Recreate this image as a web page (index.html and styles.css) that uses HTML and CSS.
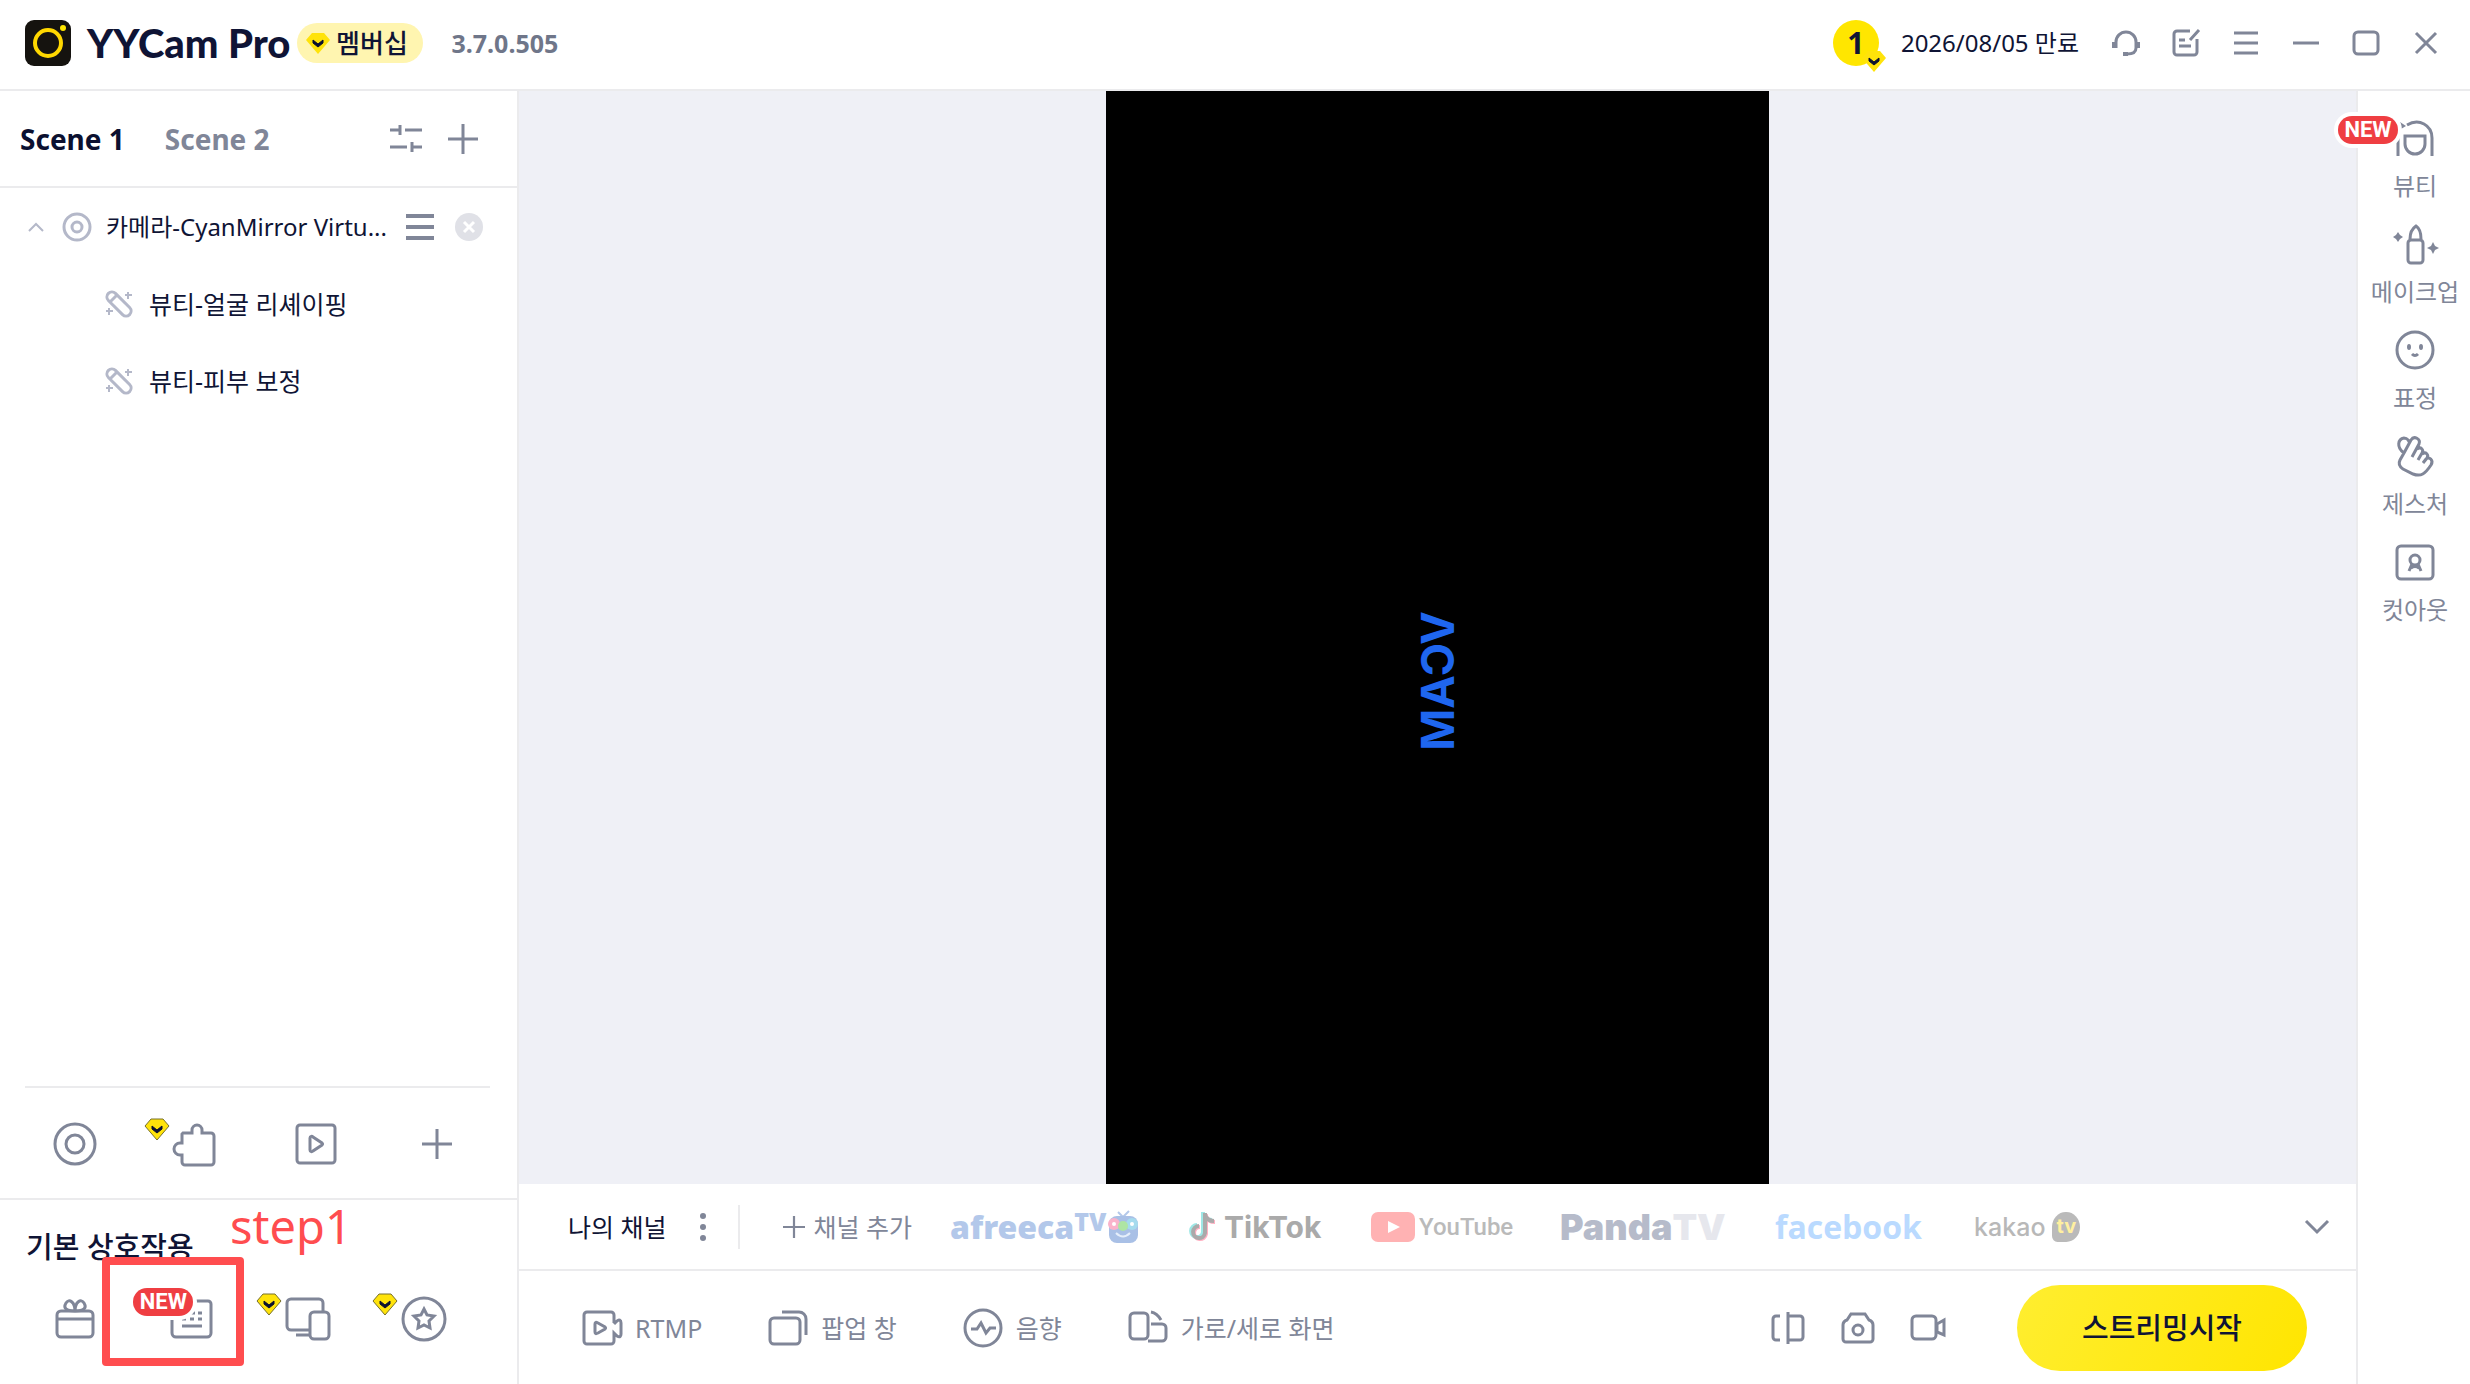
FILE: index.html
```html
<!DOCTYPE html>
<html lang="ko">
<head>
    <meta charset="UTF-8">
    <meta name="viewport" content="width=device-width, initial-scale=1.0">
    <title>YYCam Pro</title>
    <link rel="stylesheet" href="styles.css">
</head>
<body>
<!-- shared icons -->
<svg class="defs" width="0" height="0">
    <symbol id="gem" viewBox="0 0 26 24">
        <path d="M7 2h12l6 7-12 14L1 9z" fill="#ffe30a"/>
        <path d="M8 9l5 4 5-4v3l-5 4-5-4z" fill="#0b1030" stroke="#0b1030" stroke-width="1"/>
    </symbol>
    <symbol id="plus" viewBox="0 0 30 30"><path d="M15 0v30M0 15h30"/></symbol>
    <symbol id="menu" viewBox="0 0 28 28"><path d="M2 4h24M2 14h24M2 24h24"/></symbol>
    <symbol id="drag" viewBox="0 0 28 28"><path d="M0 3h28M0 14h28M0 25h28"/></symbol>
    <symbol id="wand" viewBox="0 0 28 28">
        <rect x="-1" y="9" width="30" height="10" rx="5" transform="rotate(45 14 14)"/>
        <path d="M5 12l7-7"/>
        <path d="M23 2v7M20 5h7M4 18v7M1 21h7" stroke-width="2"/>
    </symbol>
</svg>

<header class="topbar">
    <svg class="logo" viewBox="0 0 46 46">
        <rect width="46" height="46" rx="9" fill="#15130f"/>
        <circle cx="23" cy="23" r="13" fill="none" stroke="#ffd800" stroke-width="4"/>
        <circle cx="38" cy="8" r="3" fill="#ffe600"/>
    </svg>
    <h1 class="brand">YYCam Pro</h1>
    <button class="member"><svg class="gem"><use href="#gem"/></svg>멤버십</button>
    <span class="version">3.7.0.505</span>
    <div class="account">
        <span class="coin">1<svg class="gem coin-gem"><use href="#gem"/></svg></span>
        <span class="expire">2026/08/05 만료</span>
    </div>
    <div class="window-tools">
        <button aria-label="고객센터"><svg class="icon" viewBox="0 0 28 28"><path d="M4 19v-6a10 10 0 0 1 20 0v6c0 5-4 6-9 6"/><path d="M2 13v6M26 13v6M11 25h5" stroke-width="4"/></svg></button>
        <button aria-label="피드백"><svg class="icon" viewBox="0 0 28 28"><path d="M18 2H5a3 3 0 0 0-3 3v18a3 3 0 0 0 3 3h17a3 3 0 0 0 3-3V10M18 11l9-10M7 11h6M7 17h12"/></svg></button>
        <button aria-label="메뉴"><svg class="icon"><use href="#menu"/></svg></button>
        <button aria-label="최소화"><svg class="icon" viewBox="0 0 28 28"><path d="M1 14h26"/></svg></button>
        <button aria-label="최대화"><svg class="icon" viewBox="0 0 28 28"><rect x="2" y="3" width="24" height="22" rx="4"/></svg></button>
        <button aria-label="닫기"><svg class="icon" viewBox="0 0 28 28"><path d="M4 4l20 20M24 4L4 24"/></svg></button>
    </div>
</header>

<div class="workspace">
    <aside class="sidebar">
        <nav class="scenes">
            <button class="scene active">Scene 1</button>
            <button class="scene">Scene 2</button>
            <div class="scene-tools">
                <button aria-label="장면 설정"><svg class="icon sliders" viewBox="0 0 32 28"><path d="M0 5h9M15 5h17M10 0v10M0 22h17M23 22h9M22 17v10"/></svg></button>
                <button aria-label="장면 추가"><svg class="icon add"><use href="#plus"/></svg></button>
            </div>
        </nav>

        <ul class="sources">
            <li class="source">
                <svg class="icon pale chevron" viewBox="0 0 16 10"><path d="M1 9l7-7 7 7"/></svg>
                <svg class="icon pale lens" viewBox="0 0 30 30"><circle cx="15" cy="15" r="13"/><circle cx="15" cy="15" r="5"/></svg>
                <span class="source-name">카메라-CyanMirror Virtu...</span>
                <button aria-label="소스 메뉴"><svg class="icon drag"><use href="#drag"/></svg></button>
                <button aria-label="소스 삭제"><svg class="remove" viewBox="0 0 28 28"><circle cx="14" cy="14" r="14" fill="#e0e1e7"/><path d="M9 9l10 10M19 9L9 19" stroke="#fff" stroke-width="3"/></svg></button>
            </li>
            <li class="effect"><svg class="icon pale"><use href="#wand"/></svg>뷰티-얼굴 리셰이핑</li>
            <li class="effect"><svg class="icon pale"><use href="#wand"/></svg>뷰티-피부 보정</li>
        </ul>

        <div class="add-row">
            <button aria-label="카메라"><svg class="icon" viewBox="0 0 44 44"><circle cx="22" cy="22" r="20"/><circle cx="22" cy="22" r="9"/></svg></button>
            <button aria-label="플러그인"><svg class="icon" viewBox="0 0 44 44"><path d="M9 11h9V8a5 5 0 0 1 10 0v3h9a3 3 0 0 1 3 3v26a3 3 0 0 1-3 3H11a3 3 0 0 1-3-3v-7H6a6 6 0 0 1 0-12h2v-9z"/></svg><svg class="gem tag-gem"><use href="#gem"/></svg></button>
            <button aria-label="미디어"><svg class="icon" viewBox="0 0 44 44"><rect x="3" y="3" width="38" height="38" rx="3"/><path d="M16 16c0-2 2-2 3-1l9 6q1 1 0 2l-9 6c-1 1-3 1-3-1z"/></svg></button>
            <button aria-label="추가"><svg class="icon add"><use href="#plus"/></svg></button>
        </div>

        <section class="interact">
            <h2>기본 상호작용</h2>
            <div class="interact-row">
                <button aria-label="선물"><svg class="icon" viewBox="0 0 44 44"><rect x="4" y="14" width="36" height="26" rx="4"/><path d="M4 22h36M22 14c-9 0-12-3-9-8s9-1 9 8c0-9 6-13 9-8s0 8-9 8"/></svg></button>
                <button aria-label="키보드"><svg class="icon" viewBox="0 0 44 44"><path d="M26 4h13a3 3 0 0 1 3 3v29a4 4 0 0 1-4 4H7a4 4 0 0 1-4-4V22M22 16h4M29 16h4M13 22h4M21 22h4M29 22h4M13 29h20"/></svg><span class="new tag-new">NEW</span></button>
                <button aria-label="화면 공유"><svg class="icon" viewBox="0 0 44 44"><path d="M23 33H5a4 4 0 0 1-4-4V6a4 4 0 0 1 4-4h28a4 4 0 0 1 4 4v8M10 38h13"/><rect x="24" y="15" width="19" height="27" rx="4"/></svg><svg class="gem tag-gem"><use href="#gem"/></svg></button>
                <button aria-label="즐겨찾기"><svg class="icon" viewBox="0 0 44 44"><circle cx="22" cy="22" r="21"/><path d="M22 12l3 6 7 1-5 5 1 7-6-3-6 3 1-7-5-5 7-1z"/></svg><svg class="gem tag-gem"><use href="#gem"/></svg></button>
                <span class="marker"></span>
            </div>
            <span class="step">step1</span>
        </section>
    </aside>

    <main class="center">
        <div class="stage">
            <div class="video"><span class="watermark">VCAM</span></div>
        </div>

        <div class="channels">
            <span class="my-channel">나의 채널</span>
            <button aria-label="채널 메뉴"><svg class="dots" viewBox="0 0 6 30"><circle cx="3" cy="4" r="3"/><circle cx="3" cy="15" r="3"/><circle cx="3" cy="26" r="3"/></svg></button>
            <button class="channel-add"><svg class="icon"><use href="#plus"/></svg>채널 추가</button>
            <div class="platforms">
                <a href="#" class="afreeca">afreeca<sup>TV</sup><svg viewBox="0 0 30 34"><path d="M10 2l5 5 6-6" fill="none" stroke="#b3c8ea" stroke-width="2"/><rect x="1" y="6" width="29" height="27" rx="8" fill="#a9c0e6"/><circle cx="6" cy="14" r="6" fill="#f9b3cb"/><circle cx="24" cy="14" r="6" fill="#a5dbee"/><circle cx="15" cy="16" r="5" fill="#aee5a4"/><circle cx="6" cy="14" r="2" fill="#fff"/><circle cx="24" cy="14" r="2" fill="#fff"/><path d="M8 23q7 7 14 0" fill="none" stroke="#e5eefa" stroke-width="2"/></svg></a>
                <a href="#" class="tiktok"><svg viewBox="0 0 28 32" fill="none" stroke-width="4"><path d="M14 1v20a6 6 0 1 1-6-7M14 3q2 6 9 6" stroke="#9fe8e6"/><path d="M17 3v20a6 6 0 1 1-6-7M17 5q2 6 9 6" stroke="#ffb0c2"/><path d="M16 2v20a6 6 0 1 1-6-7M16 4q2 6 9 6" stroke="#aaa"/></svg>TikTok</a>
                <a href="#" class="youtube"><svg viewBox="0 0 44 30"><rect width="44" height="30" rx="7" fill="#ffb2b3"/><path d="M17 9l12 6-12 6z" fill="#fff"/></svg>YouTube</a>
                <a href="#" class="panda">Panda<span>TV</span></a>
                <a href="#" class="facebook">facebook</a>
                <a href="#" class="kakao">kakao<span class="bubble">tv</span></a>
            </div>
            <button class="more" aria-label="더보기"><svg class="icon" viewBox="0 0 26 16"><path d="M2 2l11 11L24 2"/></svg></button>
        </div>

        <div class="toolbar">
            <button class="tool"><svg class="icon" viewBox="0 0 40 36"><path d="M32 13V5a3 3 0 0 0-3-3H5a3 3 0 0 0-3 3v26a3 3 0 0 0 3 3h24a3 3 0 0 0 3-3v-8l3 3c3 2 4 0 4-2V13c0-3-2-4-4-2l-3 3"/><path d="M13 14c0-2 1-2 3-1l7 4q1 1 0 2l-7 4c-2 1-3 1-3-1z"/></svg>RTMP</button>
            <button class="tool"><svg class="icon" viewBox="0 0 40 36"><rect x="2" y="8" width="30" height="26" rx="4"/><path d="M14 2h17a7 7 0 0 1 7 7v16"/></svg>팝업 창</button>
            <button class="tool"><svg class="icon" viewBox="0 0 40 40"><circle cx="20" cy="20" r="18"/><path d="M8 21h6l4-6 5 10 4-5h6"/></svg>음향</button>
            <button class="tool"><svg class="icon" viewBox="0 0 40 36"><rect x="2" y="3" width="18" height="26" rx="4"/><path d="M23 14h11a4 4 0 0 1 4 4v9a4 4 0 0 1-4 4H20M23 2q6 1 10 8"/></svg>가로/세로 화면</button>
            <div class="capture">
                <button aria-label="좌우 반전"><svg class="icon" viewBox="0 0 34 32"><path d="M9 4H5a3 3 0 0 0-3 3v18a3 3 0 0 0 3 3h4M17 0v32M17 4h12a3 3 0 0 1 3 3v18a3 3 0 0 1-3 3H17"/></svg></button>
                <button aria-label="사진 촬영"><svg class="icon" viewBox="0 0 34 32"><path d="M10 2h14l4 6c3 1 4 2 4 5v14a3 3 0 0 1-3 3H5a3 3 0 0 1-3-3V13c0-3 1-4 4-5z"/><circle cx="17" cy="18" r="5"/></svg></button>
                <button aria-label="녹화"><svg class="icon" viewBox="0 0 34 32"><rect x="1" y="4" width="24" height="23" rx="4"/><path d="M26 12l7-4v15l-7-3z"/></svg></button>
            </div>
            <button class="start">스트리밍시작</button>
        </div>
    </main>

    <nav class="rail">
        <button><svg class="icon" viewBox="0 0 40 40"><path d="M3 38V18M12 7c12-7 25 0 25 13v18M10 18h20v8a10 10 0 0 1-20 0z"/><path d="M5 4l6 4-5 3z" fill="currentColor" stroke="none"/></svg>뷰티<span class="new rail-new">NEW</span></button>
        <button><svg class="icon lipstick" viewBox="0 0 48 40"><rect x="17" y="16" width="15" height="23" rx="3"/><path d="M19 15c0-8 3-11 6-13 3 2 5 5 5 13"/><path d="M7 8l2 3 3 2-3 2-2 3-2-3-3-2 3-2zM42 18l2 4 4 2-4 2-2 4-2-4-4-2 4-2z" fill="currentColor" stroke="none"/></svg>메이크업</button>
        <button><svg class="icon" viewBox="0 0 40 40"><circle cx="20" cy="20" r="18"/><ellipse cx="14" cy="17" rx="2" ry="3" fill="currentColor" stroke="none"/><ellipse cx="26" cy="17" rx="2" ry="3" fill="currentColor" stroke="none"/><path d="M17 24q3 3 6 0"/></svg>표정</button>
        <button><svg class="icon" viewBox="0 0 40 40"><path d="M9 17C1 11 3 3 9 2c4 0 5 4 5 4M9 17L16 4c3-5 10-1 8 4l-7 13M9 17l-4 7c-2 4 0 7 3 9l10 5c8 3 12 0 18-9 3-5-2-9-5-6l-3 4M22 13c4-3 7 1 5 4l-4 7M27 18c4-3 7 1 5 4l-4 5"/></svg>제스처</button>
        <button><svg class="icon" viewBox="0 0 40 40"><rect x="2" y="4" width="36" height="33" rx="4"/><circle cx="20" cy="18" r="5"/><path d="M17 22l-3 7M23 22l3 7M16 26q4-3 8 0"/></svg>컷아웃</button>
    </nav>
</div>
</body>
</html>
```
FILE: styles.css
```css
* {
    box-sizing: border-box;
}
body {
    margin: 0;
    height: 100vh;
    display: flex;
    flex-direction: column;
    background: #fff;
    color: #0f1435;
    font-family: "Noto Sans", "Noto Sans CJK KR", sans-serif;
    font-size: 24px;
    line-height: 32px;
}
button {
    display: flex;
    align-items: center;
    justify-content: center;
    position: relative;
    padding: 0;
    border: none;
    background: none;
    color: #808698;
    font: inherit;
    cursor: pointer;
}
a {
    color: inherit;
    text-decoration: none;
}
svg {
    display: block;
    flex: none;
}
.defs {
    position: absolute;
}
.icon {
    width: 28px;
    height: 28px;
    fill: none;
    stroke: currentColor;
    stroke-width: 3;
    overflow: visible;
}
.pale {
    color: #b4b8c9;
}
.gem {
    width: 26px;
    height: 24px;
}
.add {
    width: 30px;
    height: 30px;
}
.new {
    position: absolute;
    width: 60px;
    height: 28px;
    border-radius: 14px;
    background: #ef3e42;
    box-shadow: 0 0 0 4px #fff;
    color: #fff;
    font-family: Roboto, sans-serif;
    font-size: 22px;
    font-weight: 700;
    line-height: 28px;
    text-align: center;
}

/* top bar */
.topbar {
    display: flex;
    align-items: center;
    height: 91px;
    padding: 0 30px 4px 25px;
    border-bottom: 2px solid #ebebed;
}
.logo {
    width: 46px;
    height: 46px;
}
.brand {
    margin: 0 7px 0 16px;
    font-family: Lato, sans-serif;
    font-size: 40px;
    font-weight: 900;
    line-height: 46px;
    white-space: nowrap;
}
.member {
    gap: 5px;
    width: 126px;
    height: 40px;
    padding-right: 8px;
    border-radius: 20px;
    background: #fff5b0;
    color: #0f1435;
    font-size: 26px;
    font-weight: 500;
}
.version {
    margin-left: 28px;
    color: #6f7689;
    font-size: 25px;
    font-weight: 700;
}
.account {
    display: flex;
    align-items: center;
    gap: 22px;
    margin-left: auto;
}
.coin {
    position: relative;
    width: 46px;
    height: 46px;
    border-radius: 50%;
    background: #ffe600;
    font-size: 30px;
    font-weight: 700;
    line-height: 46px;
    text-align: center;
}
.coin-gem {
    position: absolute;
    right: -8px;
    bottom: -7px;
}
.window-tools {
    display: flex;
    gap: 32px;
    margin-left: 33px;
}

/* layout */
.workspace {
    flex: 1;
    display: flex;
    min-height: 0;
}
.sidebar {
    display: flex;
    flex-direction: column;
    width: 519px;
    border-right: 2px solid #ebebed;
}
.center {
    flex: 1;
    display: flex;
    flex-direction: column;
    min-width: 0;
}
.rail {
    display: flex;
    flex-direction: column;
    gap: 22px;
    width: 114px;
    padding-top: 27px;
    border-left: 2px solid #ebebed;
}

/* scenes and sources */
.scenes {
    display: flex;
    align-items: center;
    gap: 40px;
    height: 97px;
    padding: 0 39px 0 20px;
    border-bottom: 2px solid #ebebed;
}
.scene {
    font-size: 28px;
    font-weight: 700;
}
.active {
    color: #0b1030;
}
.scene-tools {
    display: flex;
    align-items: center;
    gap: 26px;
    margin-left: auto;
}
.sliders {
    width: 32px;
}
.sources {
    flex: 1;
    margin: 0;
    padding: 0;
    list-style: none;
}
.source,
.effect {
    display: flex;
    align-items: center;
    height: 77px;
}
.source {
    padding: 0 34px 0 28px;
}
.chevron {
    width: 16px;
    height: 10px;
    margin-right: 18px;
    stroke-width: 2;
}
.lens {
    width: 30px;
    height: 30px;
    margin-right: 14px;
}
.source-name {
    flex: 1;
    white-space: nowrap;
}
.drag {
    margin-right: 21px;
    stroke-width: 4;
}
.remove {
    width: 28px;
    height: 28px;
}
.effect {
    gap: 16px;
    padding-left: 105px;
    font-size: 25px;
}

/* bottom of the sidebar */
.add-row,
.interact-row {
    display: flex;
    align-items: center;
    justify-content: space-between;
}
.add-row {
    height: 112px;
    margin: 0 27px 0 25px;
    padding: 2px 31px 0 28px;
    border-top: 2px solid #ebebed;
}
.add-row button,
.interact-row button {
    width: 44px;
    height: 44px;
}
.add-row .icon:not(.add),
.interact-row .icon {
    width: 44px;
    height: 44px;
}
.tag-gem {
    position: absolute;
    top: -5px;
    left: -30px;
    stroke: #77702c;
}
.tag-new {
    top: -9px;
    left: -36px;
}
.interact {
    position: relative;
    height: 186px;
    padding-top: 29px;
    border-top: 2px solid #ebebed;
}
.interact h2 {
    margin: 0 0 32px 26px;
    font-size: 29px;
    font-weight: 500;
    line-height: 36px;
}
.interact-row {
    position: relative;
    padding: 0 71px 0 53px;
}
.marker {
    position: absolute;
    top: -40px;
    left: 102px;
    width: 142px;
    height: 109px;
    border: 8px solid #ff4d4f;
    border-radius: 4px;
}
.step {
    position: absolute;
    top: -2px;
    left: 230px;
    color: #ff4d4f;
    font-size: 47px;
    line-height: 56px;
}

/* preview */
.stage {
    flex: 1;
    display: flex;
    justify-content: center;
    background: #eff0f6;
}
.video {
    display: flex;
    align-items: center;
    justify-content: center;
    width: 663px;
    padding-top: 86px;
    background: #000;
}
.watermark {
    color: #1f66ef;
    font-family: Inter, sans-serif;
    font-size: 45px;
    font-weight: 700;
    transform: rotate(90deg) scaleY(-1);
}

/* channels */
.channels {
    display: flex;
    align-items: center;
    height: 87px;
    padding: 0 26px 0 49px;
    border-bottom: 2px solid #ebebed;
    white-space: nowrap;
}
.my-channel {
    margin-right: 33px;
    font-size: 25px;
}
.dots {
    width: 6px;
    height: 30px;
    fill: #808698;
}
.channel-add {
    gap: 9px;
    height: 44px;
    margin-left: 32px;
    padding-left: 43px;
    border-left: 2px solid #ebebed;
    font-size: 25px;
}
.channel-add .icon {
    width: 22px;
    height: 22px;
}
.platforms {
    display: flex;
    align-items: center;
    gap: 51px;
    margin-left: 38px;
}
.platforms a {
    display: flex;
    align-items: center;
    height: 34px;
    font-weight: 700;
}
.platforms .afreeca {
    width: 188px;
    color: #b3c8ea;
    font-size: 32px;
    font-weight: 900;
}
.afreeca sup {
    align-self: flex-start;
    font-size: 25px;
    line-height: 22px;
}
.afreeca svg {
    width: 30px;
    height: 34px;
    margin-left: auto;
}
.tiktok {
    gap: 7px;
    width: 131px;
    color: #aaa;
    font-family: Inter, sans-serif;
    font-size: 30px;
}
.tiktok svg {
    width: 28px;
    height: 32px;
}
.platforms .youtube {
    gap: 4px;
    width: 138px;
    color: #bababa;
    font-family: Roboto, sans-serif;
    font-size: 24px;
    font-weight: 500;
}
.youtube svg {
    width: 44px;
    height: 30px;
}
.platforms .panda {
    width: 164px;
    color: #b6bbca;
    font-family: Inter, sans-serif;
    font-size: 36px;
    font-weight: 900;
}
.panda span {
    color: #e6e7ed;
}
.facebook {
    width: 148px;
    color: #badaff;
    font-family: "Open Sans", sans-serif;
    font-size: 32px;
}
.platforms .kakao {
    gap: 7px;
    width: 106px;
    color: #b8b8b8;
    font-family: Inter, sans-serif;
    font-size: 25px;
    font-weight: 500;
}
.bubble {
    width: 30px;
    height: 30px;
    border-radius: 50% 50% 50% 20%;
    background: #bababa;
    color: #fff0a0;
    font-size: 20px;
    font-weight: 700;
    line-height: 28px;
    text-align: center;
}
.more {
    margin-left: auto;
}
.more .icon {
    width: 26px;
    height: 16px;
}

/* toolbar */
.toolbar {
    display: flex;
    align-items: center;
    gap: 66px;
    height: 113px;
    padding: 0 49px 0 63px;
    white-space: nowrap;
}
.tool {
    gap: 13px;
    font-size: 25px;
}
.tool .icon {
    width: 40px;
    height: 40px;
}
.capture {
    display: flex;
    gap: 36px;
    margin-left: auto;
}
.capture .icon {
    width: 34px;
    height: 32px;
}
.start {
    width: 290px;
    height: 86px;
    margin-left: 6px;
    border-radius: 43px;
    background: linear-gradient(120deg, #ffee30, #ffe500);
    color: #0f1435;
    font-size: 29px;
    font-weight: 500;
}

/* right rail */
.rail button {
    flex-direction: column;
    gap: 12px;
    padding-left: 2px;
    white-space: nowrap;
}
.rail .icon {
    width: 40px;
    height: 40px;
}
.rail .lipstick {
    width: 48px;
}
.rail-new {
    top: -2px;
    left: -20px;
}
```
